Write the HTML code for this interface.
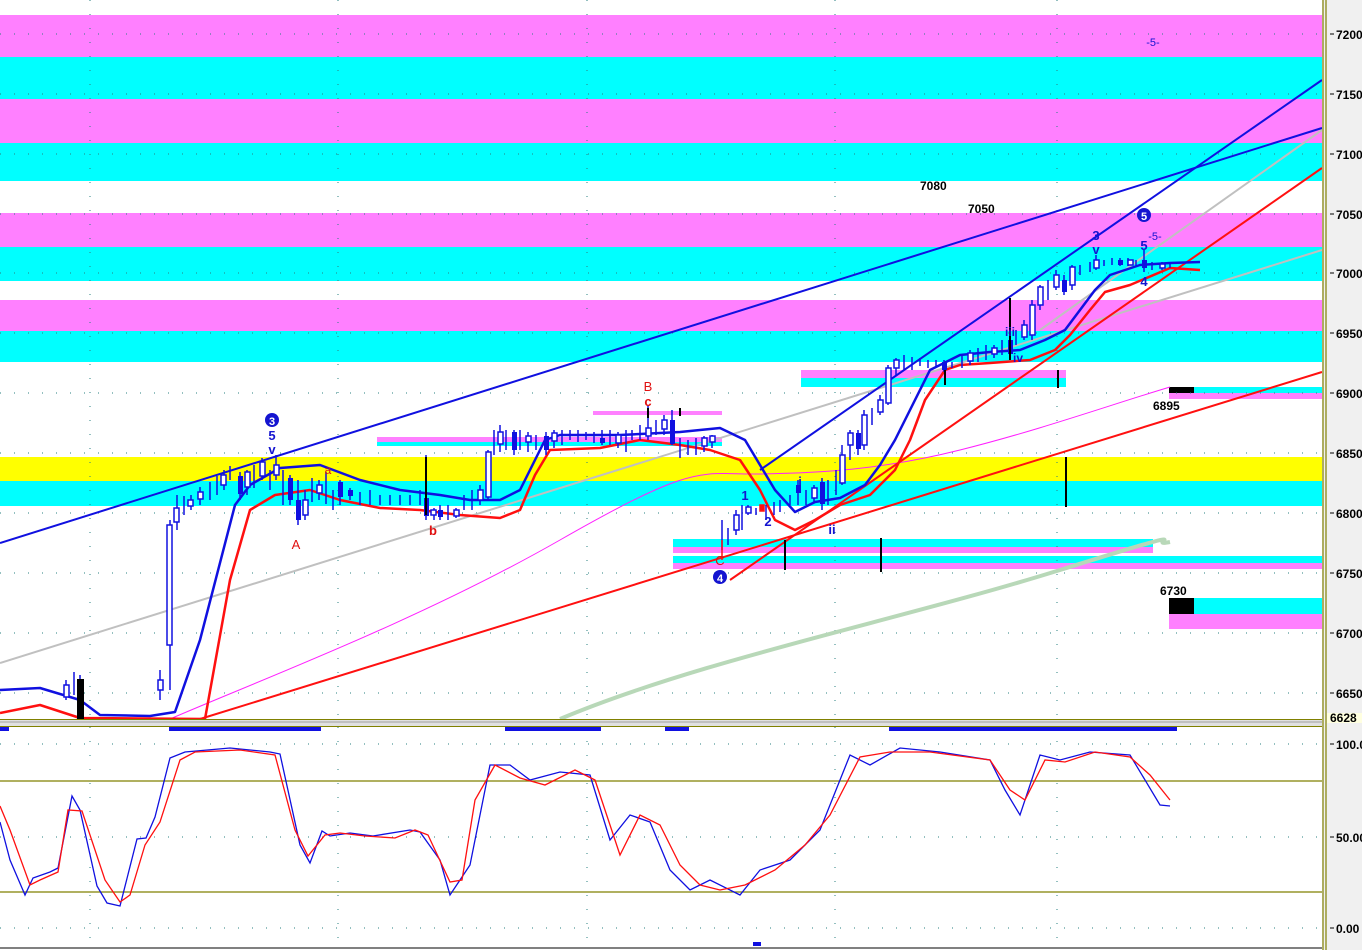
<!DOCTYPE html>
<html><head><meta charset="utf-8"><style>
html,body{margin:0;padding:0;background:#fff;}
svg{display:block;font-family:"Liberation Sans",sans-serif;}
.ax{font-family:"Liberation Sans",sans-serif;font-weight:bold;font-size:12px;fill:#000;}
.lb{font-family:"Liberation Sans",sans-serif;font-weight:bold;font-size:12px;fill:#000;}
.bl{fill:#1414d0;font-size:13px;}
.rd{fill:#e01010;font-size:13px;}
</style></head><body>
<svg width="1362" height="950" viewBox="0 0 1362 950" xmlns="http://www.w3.org/2000/svg">
<rect width="1362" height="950" fill="#fff"/>
<g>
<rect x="0" y="15" width="1322" height="42" fill="#ff80ff"/>
<rect x="0" y="57" width="1322" height="42" fill="#00ffff"/>
<rect x="0" y="99" width="1322" height="44" fill="#ff80ff"/>
<rect x="0" y="143" width="1322" height="38" fill="#00ffff"/>
<rect x="0" y="213" width="1322" height="34" fill="#ff80ff"/>
<rect x="0" y="247" width="1322" height="34" fill="#00ffff"/>
<rect x="0" y="300" width="1322" height="31" fill="#ff80ff"/>
<rect x="0" y="331" width="1322" height="31" fill="#00ffff"/>
<rect x="0" y="457" width="1322" height="24" fill="#ffff00"/>
<rect x="0" y="481" width="1322" height="25" fill="#00ffff"/>
<rect x="377" y="437" width="345" height="5" fill="#ff80ff"/>
<rect x="377" y="442" width="345" height="4" fill="#00ffff"/>
<rect x="593" y="411" width="129" height="4" fill="#ff80ff"/>
<rect x="801" y="370" width="265" height="8" fill="#ff80ff"/>
<rect x="801" y="378" width="265" height="9" fill="#00ffff"/>
<rect x="1194" y="387" width="128" height="6" fill="#00ffff"/>
<rect x="1169" y="393" width="153" height="6" fill="#ff80ff"/>
<rect x="1169" y="387" width="25" height="6" fill="#000"/>
<rect x="673" y="539" width="480" height="8" fill="#00ffff"/>
<rect x="673" y="547" width="480" height="6" fill="#ff80ff"/>
<rect x="673" y="556" width="649" height="7" fill="#00ffff"/>
<rect x="673" y="563" width="649" height="6" fill="#ff80ff"/>
<rect x="1194" y="598" width="128" height="16" fill="#00ffff"/>
<rect x="1169" y="614" width="153" height="15" fill="#ff80ff"/>
<rect x="1169" y="598" width="25" height="16" fill="#000"/>
</g>
<g stroke="#2a8080" stroke-width="1" stroke-dasharray="1,13" fill="none">
<path d="M0 34H1322M0 94H1322M0 154H1322M0 214H1322M0 273H1322M0 333H1322M0 393H1322M0 453H1322M0 513H1322M0 573H1322M0 633H1322M0 693H1322"/>
<path d="M90 0V719M338 0V719M587 0V719M835 0V719M1057 0V719"/>
<path d="M0 744H1322M0 837H1322M0 928H1322M90 727V945M338 727V945M587 727V945M835 727V945M1057 727V945"/>
</g>
<g fill="none">
<path d="M0 663L1322 250" stroke="#c0c0c0" stroke-width="2"/>
<path d="M1040 330L1322 130" stroke="#c0c0c0" stroke-width="2"/>
<path d="M170 719C260 680 420 620 560 540S700 475 760 474S880 470 960 450S1110 405 1170 387" stroke="#ff20ff" stroke-width="1"/>
<path d="M560 719C700 660 900 620 1060 570S1140 548 1170 542" stroke="#b8d8b8" stroke-width="4"/>
<path d="M0 543L1322 128" stroke="#1010e0" stroke-width="2"/>
<path d="M760 470L1322 80" stroke="#1010e0" stroke-width="2"/>
<path d="M200 719L1322 372" stroke="#ff1010" stroke-width="2"/>
<path d="M730 580L1322 168" stroke="#ff1010" stroke-width="2"/>
</g>
<path d="M0 690L40 688L80 700L100 715L150 716L175 712L200 640L235 505L250 485L280 468L320 465L360 480L400 490L440 495L470 500L500 500L520 490L545 440L560 435L620 435L680 432L700 430L720 428L745 440L760 465L775 490L795 512L815 502L840 498L865 485L880 465L895 440L910 410L930 370L960 355L990 352L1020 350L1045 340L1065 330L1080 310L1095 290L1110 275L1140 265L1170 263L1200 262" fill="none" stroke="#1010e0" stroke-width="2.5" stroke-linejoin="round"/>
<path d="M0 713L40 705L80 718L205 719L230 580L250 510L275 495L310 490L340 500L380 508L420 510L460 515L500 518L520 510L535 475L550 450L600 448L640 440L680 445L710 450L740 460L760 490L775 520L795 530L815 520L840 505L870 495L895 470L910 440L925 400L945 370L960 365L990 363L1030 360L1055 350L1070 335L1090 310L1105 292L1130 285L1170 268L1200 270" fill="none" stroke="#ff1010" stroke-width="2.5" stroke-linejoin="round"/>
<g stroke="#1010e0" stroke-width="1.5">
<path d="M66 680V700M74 672V695M80 675V719M160 670V700M170 520V690M177 495V530M184 496V515M191 495V510M200 487V505M210 482V500M217 476V495M224 470V490M230 466V480M240 472V500M247 470V495M254 465V488M262 458V480M270 470V490M276 455V480M283 470V505M290 475V505M298 480V525M305 490V520M312 478V502M319 480V500M326 472V504M333 490V510M340 480V505M350 488V500M360 492V505M370 490V505M380 495V505M390 495V505M400 495V505M410 495V505M420 490V505M426 455V520M434 508V520M440 505V520M448 505V520M456 508V518M464 495V510M472 490V510M480 485V505M488 450V500M494 430V455M500 425V452M506 430V450M514 430V455M520 430V450M528 432V452M536 435V450M546 432V455M554 430V448M562 430V445M570 430V440M578 430V442M586 432V440M594 432V443M602 430V445M610 430V445M618 432V448M626 430V452M632 430V440M640 425V440M648 405V440M656 420V435M664 415V435M672 410V445M680 438V458M688 440V455M696 438V455M704 436V452M712 435V448M722 520V550M728 528V545M736 510V535M742 505V530M748 505V515M756 508V515M766 505V520M774 502V515M780 500V512M790 495V505M798 480V505M806 490V505M814 485V503M822 478V510M828 480V505M836 470V495M842 445V485M850 430V460M858 430V455M864 410V450M872 408V425M880 395V415M888 365V405M896 358V375M904 355V370M912 357V370M920 358V366M928 360V368M936 360V368M944 360V372M952 362V368M962 355V368M970 350V365M978 348V362M986 345V360M994 345V358M1002 340V355M1010 325V355M1016 330V345M1024 320V340M1032 300V340M1040 285V310M1048 280V300M1056 270V290M1064 275V295M1072 265V290M1080 265V275M1090 262V272M1096 255V270M1104 260V266M1112 258V265M1120 258V266M1128 258V266M1136 260V266M1144 250V272M1152 262V270M1162 262V270M1170 263V268"/>
</g>
<g fill="#fff" stroke="#1010e0" stroke-width="1.5">
<rect x="64" y="685" width="5" height="12"/><rect x="158" y="680" width="5" height="10"/><rect x="167" y="525" width="5" height="120"/>
<rect x="174" y="508" width="5" height="14"/><rect x="188" y="500" width="5" height="6"/><rect x="198" y="492" width="5" height="7"/><rect x="221" y="475" width="5" height="10"/><rect x="245" y="472" width="5" height="15"/><rect x="260" y="462" width="5" height="14"/><rect x="274" y="465" width="5" height="10"/>
<rect x="303" y="500" width="5" height="15"/><rect x="317" y="485" width="5" height="8"/><rect x="431" y="510" width="5" height="5"/><rect x="454" y="510" width="5" height="6"/><rect x="478" y="490" width="5" height="10"/><rect x="486" y="452" width="5" height="45"/><rect x="498" y="432" width="5" height="12"/>
<rect x="526" y="436" width="5" height="6"/><rect x="552" y="433" width="5" height="8"/><rect x="616" y="435" width="5" height="8"/><rect x="646" y="428" width="5" height="8"/><rect x="662" y="420" width="5" height="9"/><rect x="702" y="438" width="5" height="8"/><rect x="710" y="436" width="5" height="6"/>
<rect x="734" y="515" width="5" height="15"/><rect x="746" y="507" width="5" height="6"/><rect x="812" y="488" width="5" height="10"/><rect x="840" y="455" width="5" height="28"/><rect x="848" y="433" width="5" height="12"/><rect x="862" y="415" width="5" height="30"/><rect x="878" y="400" width="5" height="12"/><rect x="886" y="368" width="5" height="35"/><rect x="894" y="360" width="5" height="8"/>
<rect x="968" y="353" width="5" height="8"/><rect x="992" y="348" width="5" height="6"/><rect x="1022" y="325" width="5" height="12"/><rect x="1030" y="305" width="5" height="30"/><rect x="1038" y="287" width="5" height="18"/><rect x="1054" y="275" width="5" height="12"/><rect x="1070" y="267" width="5" height="18"/><rect x="1094" y="260" width="5" height="8"/><rect x="1128" y="260" width="5" height="5"/><rect x="1160" y="264" width="5" height="4"/>
</g>
<g fill="#1010e0">
<rect x="238" y="476" width="5" height="18"/><rect x="288" y="478" width="5" height="22"/><rect x="296" y="500" width="5" height="20"/><rect x="338" y="482" width="5" height="15"/><rect x="348" y="490" width="5" height="6"/><rect x="424" y="498" width="5" height="18"/><rect x="438" y="510" width="5" height="7"/><rect x="512" y="432" width="5" height="18"/><rect x="544" y="436" width="5" height="14"/><rect x="600" y="438" width="5" height="5"/><rect x="670" y="420" width="5" height="24"/>
<rect x="796" y="485" width="5" height="8"/><rect x="820" y="482" width="5" height="22"/><rect x="856" y="433" width="5" height="16"/><rect x="942" y="362" width="5" height="8"/><rect x="1008" y="340" width="5" height="14"/><rect x="1062" y="280" width="5" height="12"/><rect x="1118" y="260" width="5" height="5"/><rect x="1142" y="260" width="5" height="8"/>
</g>
<g fill="#000" stroke="#000" stroke-width="2">
<rect x="78" y="680" width="5" height="39"/><path d="M426 457V515M1010 298V360M945 370V385M1058 370V388M1066 457V507M785 540V570M881 538V572M648 408V418M680 408V416"/>
</g>
<g fill="none" stroke="#ff1010" stroke-width="1.5"><rect x="760" y="505" width="4" height="6" fill="#ff1010"/><path d="M722 540V560"/></g>
<rect x="1322" y="0" width="40" height="950" fill="#f0f0f0"/>
<path d="M1323 0V950M1326 0V950" stroke="#808000" stroke-width="1.2"/>
<path d="M1330 34h4M1330 94h4M1330 154h4M1330 214h4M1330 273h4M1330 333h4M1330 393h4M1330 453h4M1330 513h4M1330 573h4M1330 633h4M1330 693h4M1330 744h4M1330 837h4M1330 928h4" stroke="#000"/>
<g class="ax">
<text x="1336" y="39">7200.</text><text x="1336" y="99">7150.</text><text x="1336" y="159">7100.</text><text x="1336" y="219">7050.</text><text x="1336" y="278">7000.</text><text x="1336" y="338">6950.</text><text x="1336" y="398">6900.</text><text x="1336" y="458">6850.</text><text x="1336" y="518">6800.</text><text x="1336" y="578">6750.</text><text x="1336" y="638">6700.</text><text x="1336" y="698">6650.</text>
<text x="1336" y="749">100.0</text><text x="1336" y="842">50.00</text><text x="1336" y="933">0.00</text>
</g>
<rect x="1327" y="713" width="35" height="10" fill="#ffffe0"/>
<text x="1330" y="722" class="ax" font-size="10">6628</text>
<rect x="0" y="719" width="1322" height="8" fill="#e0e0e0"/>
<path d="M0 719.5H1322M0 726.5H1322" stroke="#808000"/>
<path d="M0 722H1322" stroke="#a0a0a0"/>
<g fill="#1010e0"><rect x="0" y="727" width="9" height="4"/><rect x="169" y="727" width="152" height="4"/><rect x="505" y="727" width="96" height="4"/><rect x="665" y="727" width="24" height="4"/><rect x="889" y="727" width="288" height="4"/><rect x="753" y="942" width="8" height="4"/></g>
<path d="M0 781H1322M0 892H1322" stroke="#808000" stroke-width="1.2"/>
<path d="M0 948H1322" stroke="#000"/>
<path d="M0 822L10 860L25 895L33 878L50 872L58 868L72 796L80 810L97 886L107 903L120 906L137 839L146 838L155 817L170 758L185 752L230 748L270 752L280 754L300 845L310 863L322 831L330 836L350 833L373 836L410 830L420 832L440 860L450 895L470 865L490 765L510 765L530 780L560 772L590 775L610 840L630 815L650 822L670 870L690 890L710 880L740 895L760 870L790 860L820 830L850 755L870 765L900 748L940 752L990 760L1005 790L1020 815L1040 755L1060 760L1090 752L1130 755L1160 805L1170 806" fill="none" stroke="#1010e0" stroke-width="1.3"/>
<path d="M0 806L10 830L30 885L40 880L58 872L68 810L82 811L105 880L120 902L130 895L145 845L160 822L180 760L195 752L240 750L275 755L295 830L308 856L325 835L340 833L365 836L395 838L415 830L428 835L450 882L462 880L475 800L495 765L520 778L545 785L575 770L595 780L620 855L640 815L660 825L680 865L700 885L720 890L745 885L775 870L805 845L830 815L860 757L890 752L930 752L990 760L1010 790L1025 800L1045 760L1065 762L1095 752L1130 757L1150 775L1170 800" fill="none" stroke="#ff1010" stroke-width="1.3"/>
<g class="lb"><text x="920" y="190">7080</text><text x="968" y="213">7050</text><text x="1153" y="410">6895</text><text x="1160" y="595">6730</text></g>
<g class="bl" text-anchor="middle" font-weight="bold">
<text x="1153" y="46" font-size="11" font-weight="normal">-5-</text>
<circle cx="272" cy="420" r="7"/><text x="272" y="425" fill="#fff" font-size="11">3</text>
<text x="272" y="440">5</text><text x="272" y="454">v</text>
<circle cx="720" cy="577" r="7"/><text x="720" y="582" fill="#fff" font-size="11">4</text>
<circle cx="1144" cy="215" r="7"/><text x="1144" y="220" fill="#fff" font-size="11">5</text>
<text x="745" y="500">1</text><text x="768" y="526">2</text><text x="800" y="486">i</text><text x="832" y="534">ii</text>
<text x="1096" y="240">3</text><text x="1096" y="254">v</text><text x="1144" y="250">5</text><text x="1155" y="240" font-size="11" font-weight="normal">-5-</text><text x="1144" y="286">4</text>
<text x="1010" y="336" font-size="12">iii</text><text x="1018" y="362" font-size="12">iv</text>
</g>
<g class="rd" text-anchor="middle">
<text x="296" y="549">A</text><text x="328" y="474" font-size="12">a</text><text x="433" y="535" font-weight="bold">b</text><text x="648" y="391">B</text><text x="648" y="406" font-weight="bold">c</text><text x="720" y="565">C</text>
</g>
</svg>
</body></html>
